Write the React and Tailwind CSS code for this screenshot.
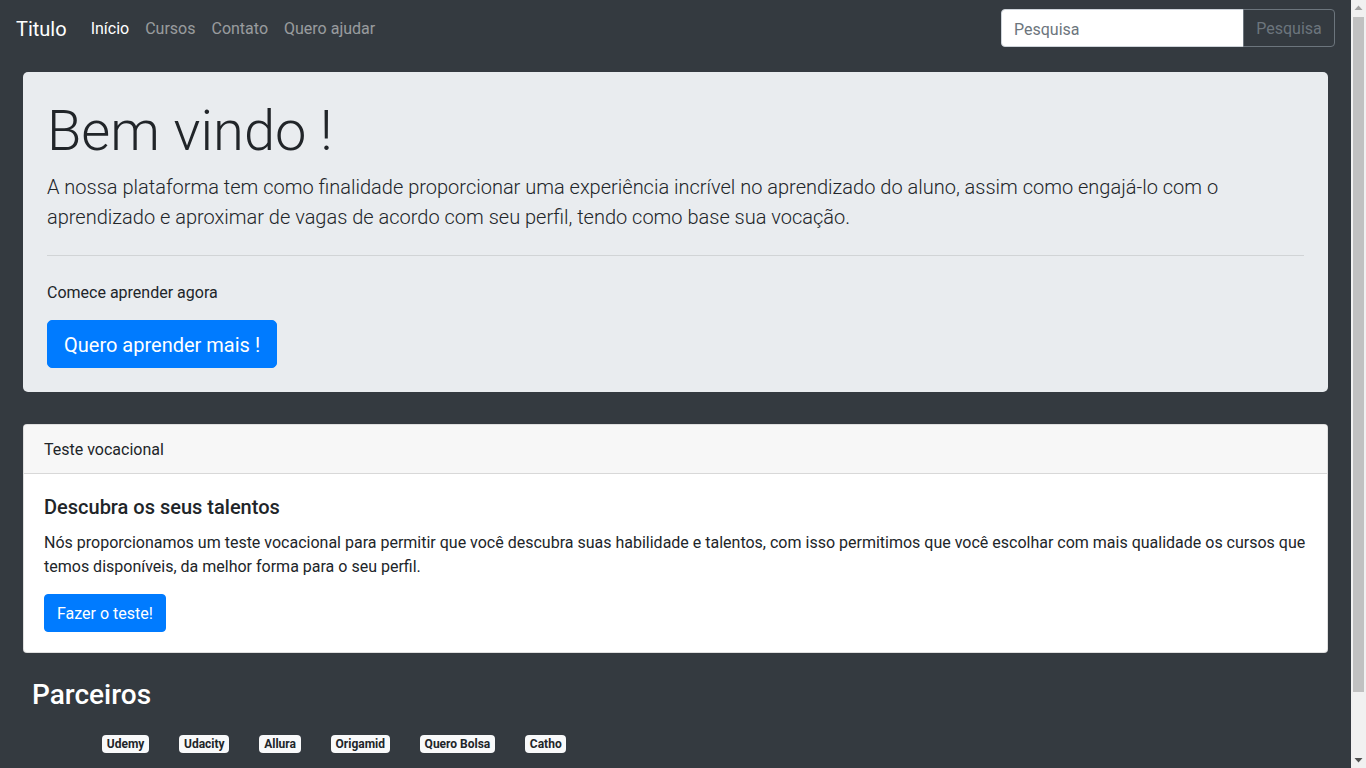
import React from "react";

function Scrollbar() {
  return (
    <div className="w-[15px] shrink-0 h-screen bg-[#f1f1f1] flex flex-col items-center">
      <div className="h-[15px] w-full flex items-center justify-center">
        <svg width="9" height="5" viewBox="0 0 9 5"><polygon points="0.5,5 4.5,0.5 8.5,5" fill="#a3a3a3" /></svg>
      </div>
      <div className="w-[11px] h-[675px] mt-[2px] bg-[#c1c1c1]" />
      <div className="flex-1" />
      <div className="h-[15px] w-full flex items-center justify-center">
        <svg width="9" height="5" viewBox="0 0 9 5"><polygon points="0.5,0 8.5,0 4.5,4.5" fill="#505050" /></svg>
      </div>
    </div>
  );
}

export default function App() {
  const partners = ["Udemy", "Udacity", "Allura", "Origamid", "Quero Bolsa", "Catho"];
  return (
    <div
      className="h-screen overflow-hidden flex bg-[#343a40] text-[#212529]"
      style={{ fontFamily: "Roboto, 'Liberation Sans', sans-serif" }}
    >
      <div className="flex-1 min-w-0 pb-[85px]">
        <nav className="h-[56px] px-4 pt-[2px] flex items-center">
          <span className="text-[20px] leading-[30px] text-white mr-4">Titulo</span>
          <ul className="flex items-center text-[16px] leading-6">
            <li className="px-2 text-white">Início</li>
            <li className="px-2 text-[rgba(255,255,255,0.5)]">Cursos</li>
            <li className="px-2 text-[rgba(255,255,255,0.5)]">Contato</li>
            <li className="px-2 text-[rgba(255,255,255,0.5)]">Quero ajudar</li>
          </ul>
          <div className="ml-auto flex -mt-[2px]">
            <input
              className="w-[243px] h-[38px] bg-white border border-[#ced4da] rounded-l-[4px] px-3 pt-[2px] text-[16px] placeholder:text-[#6c757d] outline-none"
              placeholder="Pesquisa"
            />
            <button className="w-[92px] h-[38px] pt-[2px] border border-[#6c757d] rounded-r-[4px] text-[#6c757d] text-[16px] -ml-px">
              Pesquisa
            </button>
          </div>
        </nav>

        <div className="mx-[23px] mt-4 bg-[#e9ecef] rounded-[5px] px-6 pt-[26px] pb-6">
          <h1 className="text-[56px] leading-[1.2] font-light mb-[7px]">Bem vindo !</h1>
          <p className="text-[20px] leading-[30px] font-light">
            A nossa plataforma tem como finalidade proporcionar uma experiência incrível no aprendizado do aluno, assim como engajá-lo com o aprendizado e aproximar de vagas de acordo com seu perfil, tendo como base sua vocação.
          </p>
          <hr className="mt-[23px] mb-[25px] border-t border-[rgba(0,0,0,0.1)]" />
          <p className="text-[16px] leading-6 mb-[15px]">Comece aprender agora</p>
          <button className="bg-[#007bff] text-white text-[20px] leading-[30px] px-4 pt-[9px] pb-[7px] rounded-[5px] border border-[#007bff]">
            Quero aprender mais !
          </button>
        </div>

        <div className="mx-[23px] mt-8 bg-white rounded-[4px] border border-[rgba(0,0,0,0.125)]">
          <div className="bg-[#f7f7f7] px-5 pt-[13px] pb-[11px] text-[16px] leading-6 border-b border-[rgba(0,0,0,0.125)] rounded-t-[3px]">
            Teste vocacional
          </div>
          <div className="px-5 pt-[21px] pb-5">
            <h5 className="text-[20px] leading-6 font-medium mb-3">Descubra os seus talentos</h5>
            <p className="text-[16px] leading-6 mb-[15px]">
              Nós proporcionamos um teste vocacional para permitir que você descubra suas habilidade e talentos, com isso permitimos que você escolhar com mais qualidade os cursos que temos disponíveis, da melhor forma para o seu perfil.
            </p>
            <button className="bg-[#007bff] text-white text-[16px] leading-6 px-3 pt-[7px] pb-[5px] rounded-[4px] border border-[#007bff]">
              Fazer o teste!
            </button>
          </div>
        </div>

        <h3 className="ml-[32px] mt-[25px] text-[28px] leading-[1.2] font-medium text-white">Parceiros</h3>
        <div className="flex mt-[23px] pl-[102px] gap-[30px]">
          {partners.map((p) => (
            <span
              key={p}
              className="bg-[#f8f9fa] text-[#212529] text-[12px] leading-none font-bold px-[4.8px] py-[3px] rounded-[4px]"
            >
              {p}
            </span>
          ))}
        </div>
      </div>
      <Scrollbar />
    </div>
  );
}
